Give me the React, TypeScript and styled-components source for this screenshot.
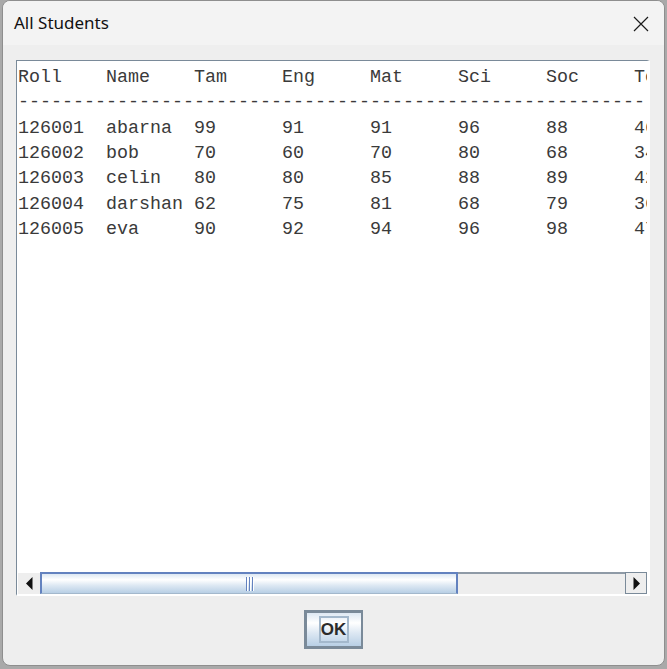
import React from "react";
import styled, { createGlobalStyle } from "styled-components";

const Global = createGlobalStyle`
  html, body {
    margin: 0;
    padding: 0;
    background: #a9a9a9;
    height: 669px;
    overflow: hidden;
  }
  #root { height: 669px; }
`;

const Window = styled.div`
  box-sizing: border-box;
  width: 663px;
  height: 666px;
  margin-left: 2px;
  border: 1px solid #8e8e8e;
  border-radius: 8px;
  overflow: hidden;
  display: flex;
  flex-direction: column;
  background: #eeeeee;
`;

const TitleBar = styled.div`
  height: 44px;
  flex: none;
  background: #f3f3f3;
  display: flex;
  align-items: center;
  justify-content: space-between;
  padding-left: 11px;
  padding-right: 15px;
`;

const Title = styled.span`
  font-family: "Noto Sans", "Open Sans", sans-serif;
  font-size: 17px;
  color: #111;
  margin-top: -1px;
`;

const CloseButton = styled.div`
  width: 16px;
  height: 16px;
  display: flex;
  align-items: center;
  justify-content: center;
  margin-top: 1px;
`;

const Content = styled.div`
  flex: 1;
  display: flex;
  flex-direction: column;
  padding: 15px 14px 0 13px;
`;

const ScrollPane = styled.div`
  box-sizing: border-box;
  height: 536px;
  display: flex;
  flex-direction: column;
  border-top: 1px solid #7a8a99;
  border-left: 1px solid #7a8a99;
  border-right: 3px solid #ffffff;
  border-bottom: 2px solid #ffffff;
`;

const Viewport = styled.div`
  flex: 1;
  background: #ffffff;
  overflow: hidden;
  padding-top: 4px;
`;

const TextLine = styled.div`
  font-family: "Liberation Mono", "Courier New", monospace;
  font-size: 18.333px;
  line-height: 25.35px;
  height: 25.35px;
  white-space: pre;
  tab-size: 8;
  -moz-tab-size: 8;
  color: #3a3a3a;
  padding-left: 1px;
`;

const ScrollBar = styled.div`
  height: 22px;
  flex: none;
  display: flex;
  background: #eeeeee;
`;

const ArrowButton = styled.div<{ $side: "left" | "right" }>`
  box-sizing: border-box;
  width: ${(p) => (p.$side === "left" ? 23 : 22)}px;
  height: 22px;
  flex: none;
  display: flex;
  align-items: center;
  justify-content: center;
  background: #eeeeee;
  border-top: 1px solid ${(p) => (p.$side === "left" ? "#ffffff" : "#7a8a99")};
  border-left: 1px solid ${(p) => (p.$side === "left" ? "#ffffff" : "#7a8a99")};
  border-right: ${(p) => (p.$side === "right" ? "1px solid #7a8a99" : "none")};
  border-bottom: ${(p) => (p.$side === "right" ? "1px solid #7a8a99" : "none")};
`;

const Thumb = styled.div`
  box-sizing: border-box;
  width: 418px;
  height: 22px;
  flex: none;
  border-top: 2px solid #6382bf;
  border-left: 2px solid #6382bf;
  border-right: 2px solid #6382bf;
  border-bottom: 1px solid #a3b8cc;
  background: linear-gradient(
    to bottom,
    #dde8f3 0%,
    #ffffff 30%,
    #dde8f3 60%,
    #b8cfe5 100%
  );
  display: flex;
  align-items: center;
  justify-content: center;
  gap: 2px;
`;

const Grip = styled.span`
  width: 1px;
  height: 14px;
  background: #6382bf;
  box-shadow: 1px 0 0 #ffffff;
`;

const Track = styled.div`
  flex: 1;
  height: 22px;
  box-sizing: border-box;
  border-top: 2px solid #8e9aa6;
  background: #eeeeee;
`;

const ButtonRow = styled.div`
  display: flex;
  justify-content: center;
  padding-top: 14px;
`;

const OkButton = styled.div`
  box-sizing: border-box;
  width: 59px;
  height: 39px;
  border: 3px solid #7a8a99;
  border-right-width: 2px;
  background: linear-gradient(
    to bottom,
    #dde8f3 0%,
    #ffffff 30%,
    #dde8f3 60%,
    #b8cfe5 100%
  );
  display: flex;
  align-items: center;
  justify-content: center;
`;

const FocusRect = styled.div`
  box-sizing: border-box;
  width: 30px;
  height: 27px;
  border: 2px solid #a3b8cc;
  display: flex;
  align-items: center;
  justify-content: center;
  font-family: "Liberation Sans", Arial, sans-serif;
  font-weight: bold;
  font-size: 17px;
  color: #2b2b2b;
  padding-top: 1px;
`;

const header = ["Roll", "Name", "Tam", "Eng", "Mat", "Sci", "Soc", "Total", "Average"];
const students: [string, string, number[]][] = [
  ["126001", "abarna", [99, 91, 91, 96, 88]],
  ["126002", "bob", [70, 60, 70, 80, 68]],
  ["126003", "celin", [80, 80, 85, 88, 89]],
  ["126004", "darshan", [62, 75, 81, 68, 79]],
  ["126005", "eva", [90, 92, 94, 96, 98]],
];

export default function App() {
  const lines: string[] = [
    header.join("\t"),
    "-".repeat(90),
    ...students.map(([roll, name, marks]) => {
      const total = marks.reduce((a, b) => a + b, 0);
      return [roll, name, ...marks, total, (total / 5).toFixed(1)].join("\t");
    }),
  ];
  return (
    <>
      <Global />
      <Window>
        <TitleBar>
          <Title>All Students</Title>
          <CloseButton>
            <svg width="16" height="16" viewBox="0 0 16 16">
              <path d="M1 1 L15 15 M15 1 L1 15" stroke="#1a1a1a" strokeWidth="1.2" fill="none" />
            </svg>
          </CloseButton>
        </TitleBar>
        <Content>
          <ScrollPane>
            <Viewport>
              {lines.map((l, i) => (
                <TextLine key={i}>{l}</TextLine>
              ))}
            </Viewport>
            <ScrollBar>
              <ArrowButton $side="left">
                <svg width="7" height="13" viewBox="0 0 7 13">
                  <polygon points="6.5,0 0,6.5 6.5,13" fill="#111" />
                </svg>
              </ArrowButton>
              <Thumb>
                <Grip />
                <Grip />
                <Grip />
              </Thumb>
              <Track />
              <ArrowButton $side="right">
                <svg width="7" height="13" viewBox="0 0 7 13">
                  <polygon points="0.5,0 7,6.5 0.5,13" fill="#111" />
                </svg>
              </ArrowButton>
            </ScrollBar>
          </ScrollPane>
          <ButtonRow>
            <OkButton>
              <FocusRect>OK</FocusRect>
            </OkButton>
          </ButtonRow>
        </Content>
      </Window>
    </>
  );
}
